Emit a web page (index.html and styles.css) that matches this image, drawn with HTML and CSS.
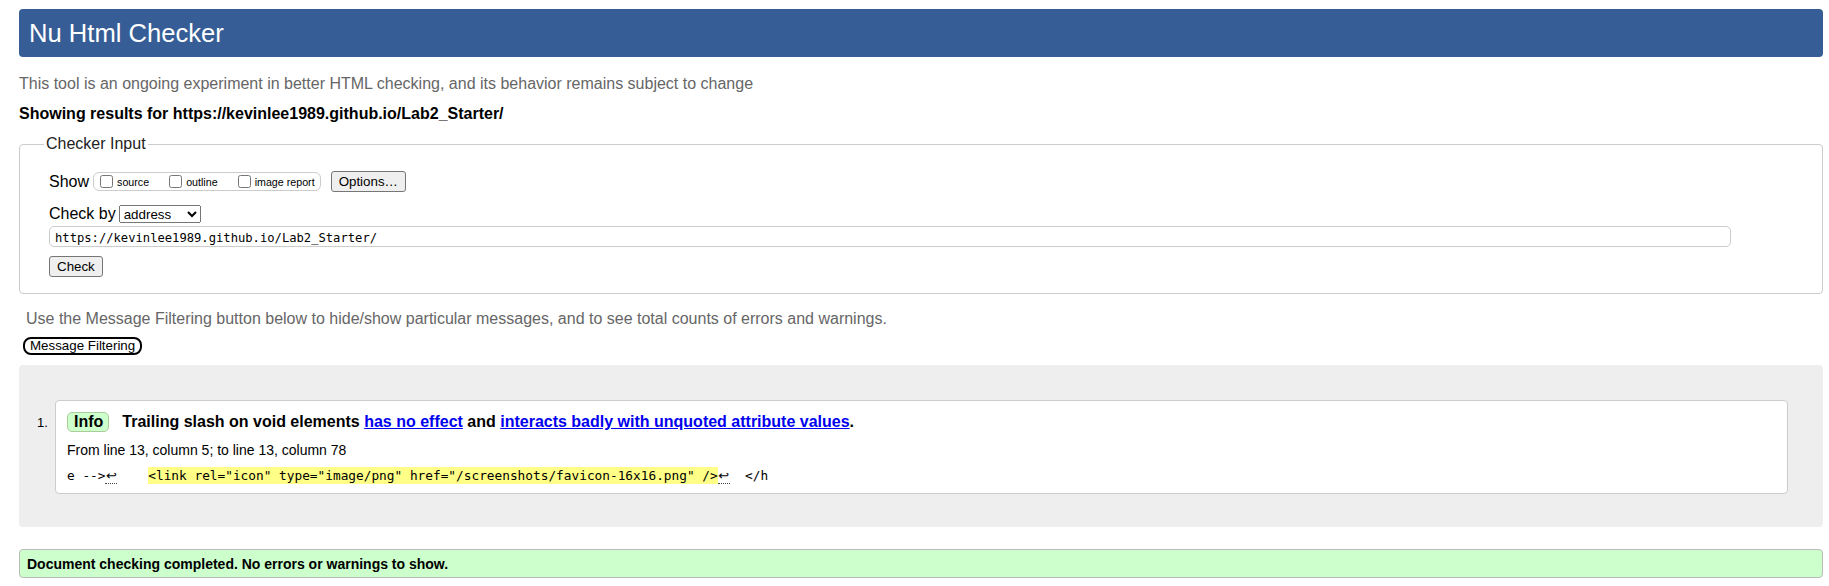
FILE: index.html
```html
<!DOCTYPE html>
<html lang="en">
<head>
<meta charset="utf-8">
<title>Nu Html Checker</title>
<link rel="stylesheet" href="styles.css">
</head>
<body>
<h1 class="title">Nu Html Checker</h1>
<p class="intro">This tool is an ongoing experiment in better HTML checking, and its behavior remains subject to change</p>
<p class="showing">Showing results for https://kevinlee1989.github.io/Lab2_Starter/</p>
<fieldset class="input-box">
  <legend class="input-legend">Checker Input</legend>
  <div class="row row-show">
    <span class="row-label">Show</span>
    <span class="opts">
      <label class="opt"><input type="checkbox" class="cb">source</label>
      <label class="opt"><input type="checkbox" class="cb">outline</label>
      <label class="opt"><input type="checkbox" class="cb">image report</label>
    </span>
    <button class="btn btn-options" type="button">Options…</button>
  </div>
  <div class="row row-by">
    <span class="row-label">Check by</span>
    <select class="sel"><option>address</option></select>
  </div>
  <input class="url" type="text" value="https://kevinlee1989.github.io/Lab2_Starter/">
  <div class="row row-submit"><button class="btn btn-check" type="button">Check</button></div>
</fieldset>
<p class="filter-note">Use the Message Filtering button below to hide/show particular messages, and to see total counts of errors and warnings.</p>
<button class="btn-filter" type="button">Message Filtering</button>
<div class="results">
  <ol class="msgs">
    <li class="msg">
      <span class="msg-num">1.</span>
      <div class="msg-box">
        <p class="msg-head"><strong class="badge">Info</strong><span class="msg-text">Trailing slash on void elements <a class="msg-link" href="#">has no effect</a> and <a class="msg-link" href="#">interacts badly with unquoted attribute values</a>.</span></p>
        <p class="msg-loc">From line 13, column 5; to line 13, column 78</p>
        <p class="msg-extract"><code class="code">e --&gt;<b class="lf">↩</b>    <mark class="hl">&lt;link rel="icon" type="image/png" href="/screenshots/favicon-16x16.png" /&gt;</mark><b class="lf">↩</b>  &lt;/h</code></p>
      </div>
    </li>
  </ol>
</div>
<p class="done">Document checking completed. No errors or warnings to show.</p>
</body>
</html>
```

FILE: styles.css
```css
* { box-sizing: border-box; }
html { background: #fff; }
body {
  margin: 0;
  padding: 9px 6px 0 19px;
  font-family: "Liberation Sans", Arial, sans-serif;
  font-size: 16px;
  line-height: 18px;
  color: #000;
}
.title {
  margin: 0;
  height: 48px;
  padding: 0 10px;
  line-height: 48px;
  font-size: 25.6px;
  font-weight: normal;
  color: #fff;
  background: #365d95;
  border-radius: 4px;
}
.intro { margin: 18px 0 0; color: #666; }
.showing { margin: 12px 0 0; font-weight: bold; }

.input-box {
  margin: 12px 0 0;
  padding: 18px 28px 16px 29px;
  border: 1px solid #ccc;
  border-radius: 4px;
  min-width: 0;
}
.input-legend {
  padding: 0 2px;
  margin-left: -5px;
  line-height: 18px;
  color: #222;
}
.row { display: flex; align-items: center; }
.row-show { height: 21px; }
.row-label { white-space: nowrap; }
.opts {
  display: inline-flex;
  align-items: center;
  height: 19px;
  margin-left: 4px;
  padding: 0 5px 0 6px;
  border: 1px solid #ccc;
  border-radius: 6px;
}
.opt {
  display: inline-flex;
  align-items: center;
  font-size: 10.7px;
  line-height: 12px;
  white-space: nowrap;
}
.opt + .opt { margin-left: 20px; }
.cb { width: 13px; height: 13px; margin: 0 4px 0 0; }
.btn {
  height: 21px;
  padding: 0 7px;
  font: 13.33px "Liberation Sans", Arial, sans-serif;
  color: #000;
  background: #efefef;
  border: 1px solid #767676;
  border-radius: 3px;
}
.btn-options { margin-left: 10px; }
.row-by { height: 18px; margin-top: 13px; }
.sel {
  width: 82px;
  height: 18px;
  margin-left: 3px;
  font: 13.33px "Liberation Sans", Arial, sans-serif;
  color: #000;
}
.url {
  display: block;
  width: 1682px;
  height: 21px;
  margin-top: 3px;
  padding: 2px 5px 0;
  border: 1px solid #ccc;
  border-radius: 5px;
  font: 12.17px "DejaVu Sans Mono", monospace;
  color: #000;
  background: #fff;
}
.row-submit { margin-top: 9px; }

.filter-note { margin: 16px 0 0; padding-left: 7px; color: #666; }
.btn-filter {
  display: block;
  height: 18px;
  margin: 9px 0 0 4px;
  padding: 0 5px;
  font: 13.33px "Liberation Sans", Arial, sans-serif;
  line-height: 14px;
  color: #000;
  background: #fff;
  border: 2px solid #000;
  border-radius: 8px;
}

.results {
  margin-top: 10px;
  padding: 35px 35px 33px 18px;
  background: #eee;
  border-radius: 4px;
}
.msgs { margin: 0; padding: 0; list-style: none; }
.msg { display: flex; align-items: baseline; }
.msg-num { flex: none; width: 18px; font-size: 13px; }
.msg-box {
  flex: 1;
  padding: 11px 11px 10px;
  background: #fff;
  border: 1px solid #ccc;
  border-radius: 4px;
}
.msg-head {
  display: flex;
  align-items: center;
  height: 20px;
  margin: 0;
  font-weight: bold;
}
.badge {
  height: 20px;
  margin-right: 13px;
  padding: 0 5px 0 6px;
  line-height: 18px;
  background: #cfc;
  border: 1px solid #ac9;
  border-radius: 5px;
}
.msg-link { color: #00e; }
.msg-loc { margin: 10px 0 0; font-size: 14px; line-height: 16px; }
.msg-extract { height: 17px; margin: 8px 0 0; line-height: 17px; }
.code {
  font: 12.79px "DejaVu Sans Mono", monospace;
  line-height: 17px;
  white-space: pre;
}
.hl { padding: 1px 0; background: #ff8; color: #000; }
.lf {
  display: inline-block;
  width: 12px;
  font: normal 13px "DejaVu Sans", sans-serif;
  text-align: center;
  line-height: 14px;
  border-bottom: 1px dotted #444;
}

.done {
  height: 29px;
  margin: 22px 0 0;
  padding: 1px 7px 0;
  font-size: 14px;
  font-weight: bold;
  line-height: 26px;
  background: #cfc;
  border: 1px solid #bbb;
  border-radius: 4px;
}
```
